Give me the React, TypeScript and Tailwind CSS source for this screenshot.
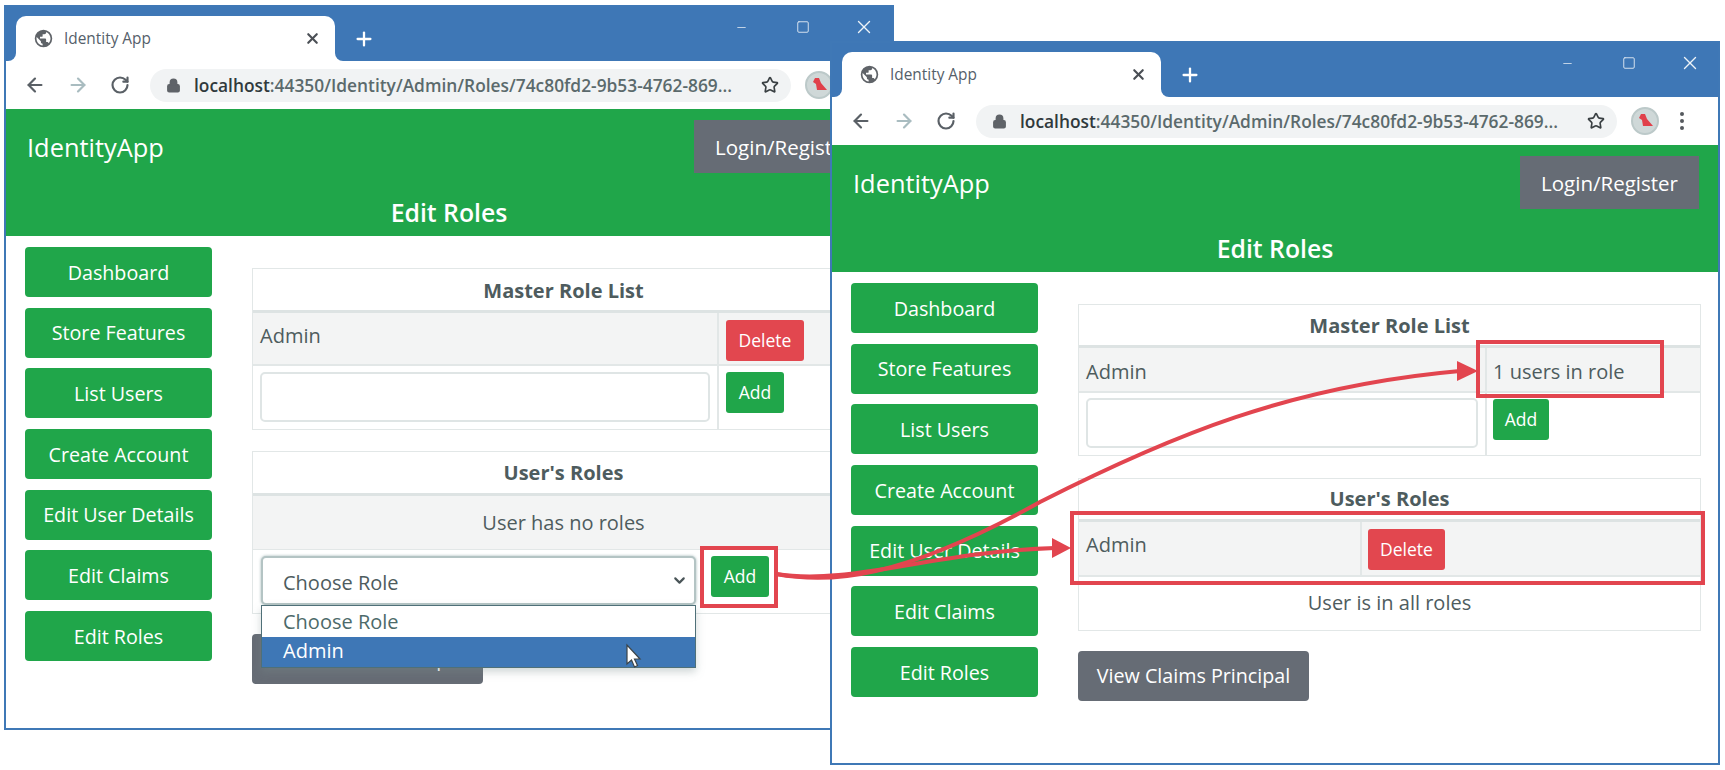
import React from "react";
import { ArrowLeft, ArrowRight, RotateCw, Lock, Star, X, Plus, Minus, Square, ChevronDown } from "lucide-react";

const font = "font-['Open_Sans','Noto_Sans',sans-serif]";

function Globe() {
  return (
    <svg width="21" height="21" viewBox="0 0 24 24" className="shrink-0">
      <path fill="#5f6368" d="M12 2a10 10 0 1 0 0 20 10 10 0 0 0 0-20zM4 12c0-.6.1-1.200.2-1.800L9 15v1c0 1.100.9 2 2 2v2c-3.900-.5-7-3.900-7-8zm13.900 5.400c-.3-.8-1-1.400-1.900-1.400h-1v-3c0-.6-.4-1-1-1H8v-2h2c.6 0 1-.4 1-1V7h2c1.100 0 2-.9 2-2v-.4c2.900 1.200 5 4.100 5 7.400 0 2.100-.8 4-2.100 5.400z" />
    </svg>
  );
}

function Avatar() {
  return (
    <div className="w-[28px] h-[28px] rounded-full bg-[#cfd8d8] border-2 border-[#bcc9c9] flex items-center justify-center shrink-0">
      <svg width="20" height="20" viewBox="0 0 20 20">
        <path fill="#e0404a" d="M6 3 L10 3 L12 8 L18 15 L8 15 L7 9 L4 7 Z" />
      </svg>
    </div>
  );
}

function Window({ className, showDots, children }: { className: string; showDots?: boolean; children: React.ReactNode }) {
  return (
    <div className={`absolute w-[890px] bg-white border-2 border-[#3f78b6] flex flex-col overflow-hidden ${className}`}>
      <div className="h-[54px] bg-[#3e77b6] flex shrink-0 relative">
        <div className="ml-[10px] mt-[9px] w-[319px] h-[45px] bg-white rounded-t-[10px] flex items-center pl-[17px] pr-[14px] relative">
          <div className="absolute left-[-8px] bottom-0 w-[8px] h-[8px] bg-white">
            <div className="w-full h-full bg-[#3e77b6] rounded-br-[8px]" />
          </div>
          <div className="absolute right-[-8px] bottom-0 w-[8px] h-[8px] bg-white">
            <div className="w-full h-full bg-[#3e77b6] rounded-bl-[8px]" />
          </div>
          <Globe />
          <span className="ml-[10px] flex-1 text-[15.400px] text-[#55606a]">Identity App</span>
          <X size={17} strokeWidth={3} className="text-[#4a4f55]" />
        </div>
        <Plus size={22} strokeWidth={2.5} className="text-white ml-[18px] mt-[21px]" />
        <div className="absolute right-0 top-0 flex items-center">
          <Minus size={13} strokeWidth={1.5} className="text-[#dfe8f2] absolute right-[144px] top-[14px]" />
          <Square size={14} strokeWidth={1.5} className="text-[#e8eff6] absolute right-[82px] top-[13px]" />
          <X size={22} strokeWidth={1.5} className="text-[#eef3f8] absolute right-[17px] top-[9px]" />
        </div>
      </div>
      <div className="h-[48px] bg-white flex items-center shrink-0 relative">
        <ArrowLeft size={22} strokeWidth={2.4} className="text-[#5a6066] ml-[18px]" />
        <ArrowRight size={22} strokeWidth={2.4} className="text-[#a9bcc0] ml-[21px]" />
        <RotateCw size={20} strokeWidth={2.6} className="text-[#5a6066] ml-[21px]" />
        <div className="ml-[20px] w-[641px] h-[33px] rounded-full bg-[#f1f3f4] flex items-center pl-[16px] pr-[12px]">
          <Lock size={15} strokeWidth={2.5} fill="#5f6368" className="text-[#5f6368] shrink-0" />
          <span className="ml-[13px] flex-1 text-[17.350px] font-semibold whitespace-nowrap overflow-hidden text-[#5b6a6c]">
            <span className="text-[#30393c]">localhost</span>:44350/Identity/Admin/Roles/74c80fd2-9b53-4762-869...
          </span>
          <Star size={18} strokeWidth={2.2} className="text-[#3a4043] shrink-0" />
        </div>
        <div className="ml-[14px]"><Avatar /></div>
        {showDots && (
          <div className="ml-[21px] flex flex-col gap-[3px]">
            <div className="w-[4px] h-[4px] rounded-full bg-[#55595e]" />
            <div className="w-[4px] h-[4px] rounded-full bg-[#55595e]" />
            <div className="w-[4px] h-[4px] rounded-full bg-[#55595e]" />
          </div>
        )}
      </div>
      <div className="h-[127px] bg-[#20a64a] shrink-0 text-white flex flex-col">
        <div className="flex items-start justify-between pl-[21px] pr-[19px] pt-[11px]">
          <span className="text-[25.400px] leading-[55px]">IdentityApp</span>
          <div className="w-[179px] h-[53px] bg-[#666c75] flex items-center justify-center text-[20.500px] pt-[1px]">Login/Register</div>
        </div>
        <div className="text-center text-[24.800px] font-semibold mt-[20px] leading-[34px]">Edit Roles</div>
      </div>
      {children}
    </div>
  );
}

function Sidebar() {
  const items = ["Dashboard", "Store Features", "List Users", "Create Account", "Edit User Details", "Edit Claims", "Edit Roles"];
  return (
    <div className="w-[187px] flex flex-col gap-[10.7px] shrink-0">
      {items.map((t) => (
        <div key={t} className="h-[50px] bg-[#20a64a] rounded-[4px] text-white text-[19.700px] pt-[1px] flex items-center justify-center whitespace-nowrap">{t}</div>
      ))}
    </div>
  );
}

function Btn({ label, red, className = "" }: { label: string; red?: boolean; className?: string }) {
  return (
    <div className={`h-[41px] rounded-[3px] text-white text-[17.500px] flex items-center justify-center shrink-0 ${red ? "bg-[#e2474f]" : "bg-[#20a64a]"} ${className}`}>{label}</div>
  );
}

function Head({ label, h }: { label: string; h: string }) {
  return (
    <div className={`${h} flex items-center justify-center font-bold text-[20px] text-[#4e5c5e] border-b-[3px] border-[#dde3e3]`}>{label}</div>
  );
}

const table = "border border-[#e2e7e7] text-[20px] text-[#4e5c5e]";

function Left() {
  return (
    <div className="flex flex-1 pl-[19px] pt-[11px] pr-[17px]">
      <Sidebar />
      <div className="ml-[40px] flex-1 pt-[21px]">
        <div className={table}>
          <Head label="Master Role List" h="h-[44px] pt-[3px]" />
          <div className="h-[53px] flex bg-[#f3f4f4] border-b-[2px] border-[#e2e7e7]">
            <div className="w-[466px] pl-[7px] pt-[8px] border-r-[2px] border-[#e2e7e7]">Admin</div>
            <Btn red label="Delete" className="w-[78px] ml-[7px] mt-[7px]" />
          </div>
          <div className="h-[63px] flex">
            <div className="w-[466px] pl-[7px] pt-[6px] pr-[7px] border-r-[2px] border-[#e2e7e7]">
              <div className="h-[50px] rounded-[5px] border-[2px] border-[#dfe5e5] bg-white" />
            </div>
            <Btn label="Add" className="w-[58px] ml-[7px] mt-[6px]" />
          </div>
        </div>
        <div className={`${table} mt-[21px]`}>
          <Head label="User's Roles" h="h-[44px]" />
          <div className="h-[54px] flex items-center justify-center bg-[#f3f4f4] border-b border-[#e2e7e7]">User has no roles</div>
          <div className="h-[63px] flex pl-[8px] pt-[6px] relative">
            <div className="w-[435px] h-[49px] rounded-[5px] border-[2px] border-[#b4c4c4] bg-white flex items-center justify-between pl-[20px] pr-[6px] shrink-0 shadow-[0_0_3px_rgba(120,150,150,0.7)]">
              <span className="mt-[5px]">Choose Role</span>
              <ChevronDown size={17} strokeWidth={3} className="text-[#4a5558]" />
            </div>
            <Btn label="Add" className="w-[58px] ml-[15px]" />
            <div className="absolute left-[8px] top-[55px] w-[435px] z-10 border border-[#4f7078] bg-white shadow-[0_4px_8px_rgba(120,140,140,0.35)]">
              <div className="h-[31px] pl-[21px] pt-[1px] leading-[30px] text-[#4d6a6a]">Choose Role</div>
              <div className="h-[30px] pl-[21px] leading-[28px] bg-[#3e77b6] text-white">Admin</div>
            </div>
          </div>
        </div>
        <div className="mt-[20px] w-[231px] h-[50px] bg-[#666c75] rounded-[4px] text-white text-[19.700px] flex items-center justify-center whitespace-nowrap">View Claims Principal</div>
      </div>
    </div>
  );
}

function Right() {
  return (
    <div className="flex flex-1 pl-[19px] pt-[11px] pr-[17px]">
      <Sidebar />
      <div className="ml-[40px] flex-1 pt-[21px]">
        <div className={table}>
          <Head label="Master Role List" h="h-[43px] pt-[2px]" />
          <div className="h-[45px] flex bg-[#f3f4f4] border-b-[2px] border-[#e2e7e7]">
            <div className="w-[408px] pl-[7px] pt-[9px] border-r-[2px] border-[#e2e7e7]">Admin</div>
            <div className="pl-[6px] pt-[9px]">1 users in role</div>
          </div>
          <div className="h-[62px] flex">
            <div className="w-[408px] pl-[7px] pt-[5px] pr-[7px] border-r-[2px] border-[#e2e7e7]">
              <div className="h-[50px] rounded-[5px] border-[2px] border-[#dfe5e5] bg-white" />
            </div>
            <Btn label="Add" className="w-[56px] ml-[6px] mt-[6px]" />
          </div>
        </div>
        <div className={`${table} mt-[22px]`}>
          <Head label="User's Roles" h="h-[43px]" />
          <div className="h-[55px] flex bg-[#f3f4f4] border-b-[2px] border-[#e2e7e7]">
            <div className="w-[283px] pl-[7px] pt-[8px] border-r-[2px] border-[#e2e7e7]">Admin</div>
            <Btn red label="Delete" className="w-[77px] ml-[6px] mt-[7px]" />
          </div>
          <div className="h-[53px] flex items-center justify-center pb-[2px]">User is in all roles</div>
        </div>
        <div className="mt-[20px] w-[231px] h-[50px] bg-[#666c75] rounded-[4px] text-white text-[19.700px] flex items-center justify-center whitespace-nowrap">View Claims Principal</div>
      </div>
    </div>
  );
}

export default function App() {
  const red = "#e2454f";
  return (
    <div className={`relative w-[1725px] h-[770px] bg-white overflow-hidden ${font}`}>
      <Window className="left-[4px] top-[5px] h-[725px]"><Left /></Window>
      <Window className="left-[830px] top-[41px] h-[724px] z-20" showDots><Right /></Window>
      <svg className="absolute left-0 top-0 z-30 pointer-events-none" width="1725" height="770">
        <g fill="none" stroke={red} strokeWidth="4">
          <rect x="702" y="548" width="74" height="58" />
          <rect x="1478" y="342" width="184" height="54" />
          <rect x="1072" y="513" width="631" height="70" />
          <path d="M776 574 C 830 584, 900 580, 1040 502 C 1170 436, 1290 386, 1460 371" />
          <path d="M776 574 C 850 586, 930 552, 1055 548" />
        </g>
        <path fill={red} d="M1478 371 L1457 361 L1457 381 Z" />
        <path fill={red} d="M1071 548 L1052 538 L1052 558 Z" />
        <path fill="#fff" stroke="#3c4448" strokeWidth="1.2" d="M627 645 L627 664 L631.500 660 L634.500 667 L637.500 665.500 L634.500 659 L640 659 Z" />
      </svg>
    </div>
  );
}
